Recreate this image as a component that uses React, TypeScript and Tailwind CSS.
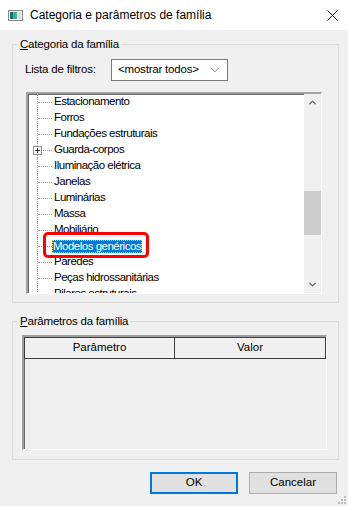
import { ChevronDown, ChevronUp } from 'lucide-react';

const items = [
  'Estacionamento',
  'Forros',
  'Fundações estruturais',
  'Guarda-corpos',
  'Iluminação elétrica',
  'Janelas',
  'Luminárias',
  'Massa',
  'Mobiliário',
  'Modelos genéricos',
  'Paredes',
  'Peças hidrossanitárias',
  'Pilares estruturais',
];

const font = "font-['Liberation_Sans',Arial,sans-serif]";

function WindowIcon() {
  return (
    <svg width="15" height="11" viewBox="0 0 15 11">
      <rect x="0.5" y="0.5" width="14" height="10" fill="#f4f4f4" stroke="#8a8a8a" />
      <rect x="2" y="2" width="3" height="7" fill="#1f6f78" />
      <rect x="5" y="2" width="4" height="7" fill="#3fb08a" />
      <rect x="10" y="2" width="3" height="7" fill="#d6dde0" />
    </svg>
  );
}

function TreeRow({ label }: { label: string }) {
  const selected = label === 'Modelos genéricos';
  const expandable = label === 'Guarda-corpos';
  return (
    <div className="relative flex h-[16px] items-center">
      <div className="absolute left-[9px] top-0 h-[16px] border-l border-dotted border-[#a0a0a0]" />
      <div className="ml-[10px] w-[14px] border-t border-dotted border-[#a0a0a0]" />
      {expandable && (
        <div className="absolute left-[5px] top-[4px] flex h-[9px] w-[9px] items-center justify-center border border-[#919191] bg-white">
          <svg width="7" height="7" viewBox="0 0 7 7">
            <path d="M1 3.5h5M3.5 1v5" stroke="#333" strokeWidth="1" />
          </svg>
        </div>
      )}
      <span
        className={
          selected
            ? 'ml-[0px] h-[13px] px-[1px] leading-[12px] bg-[#0078d7] text-white outline outline-1 outline-dotted outline-[#f5c56b] -outline-offset-1 tracking-[-0.5px]'
            : 'ml-[2px] text-black tracking-[-0.5px]'
        }
      >
        {label}
      </span>
    </div>
  );
}

export default function App() {
  return (
    <div className={`w-[348px] h-[506px] bg-[#f0f0f0] flex flex-col text-[11.5px] text-black ${font}`}>
      <div className="h-[30px] bg-white flex items-center pl-[8px] pr-[10px]">
        <WindowIcon />
        <span className="ml-[7px] text-[12px] text-black">Categoria e parâmetros de família</span>
        <svg className="ml-auto" width="11" height="11" viewBox="0 0 11 11">
          <path d="M0.5 0.5l10 10M10.5 0.5l-10 10" stroke="#111" strokeWidth="1" />
        </svg>
      </div>

      <fieldset className="ml-[12px] mt-[6px] w-[327px] border border-[#dcdcdc] px-[12px] pb-[8px]">
        <legend className="ml-[-7px] px-[2px] h-[16px] leading-[16px] tracking-[-0.2px]">
          <span className="underline">C</span>ategoria da família
        </legend>
        <div className="mt-[7px] flex items-center tracking-[-0.2px]">
          <span className="w-[86px]">Lista de filtros:</span>
          <div className="h-[22px] w-[117px] bg-white border border-[#7a7a7a] flex items-center pl-[6px] pr-[5px]">
            <span>&lt;mostrar todos&gt;</span>
            <ChevronDown className="ml-auto" size={14} strokeWidth={1} color="#333" />
          </div>
        </div>

        <div className="relative mt-[11px] ml-[1px] h-[202px] w-[296px] border-t-2 border-l-2 border-r border-b border-t-[#a0a0a0] border-l-[#a0a0a0] border-r-white border-b-white shadow-[inset_1px_1px_0_#696969] bg-white flex overflow-hidden">
          <div className="flex-1">
            {items.map(it => (
              <TreeRow key={it} label={it} />
            ))}
          </div>
          <div className="w-[17px] bg-[#f0f0f0] flex flex-col">
            <div className="h-[17px] flex items-center justify-center">
              <ChevronUp size={11} strokeWidth={3} color="#606060" />
            </div>
            <div className="flex-1 pt-[80px]">
              <div className="h-[44px] bg-[#cdcdcd]" />
            </div>
            <div className="h-[17px] flex items-center justify-center">
              <ChevronDown size={11} strokeWidth={3} color="#606060" />
            </div>
          </div>
          <div className="absolute left-[15px] top-[138px] h-[26px] w-[106px] rounded-[5px] border-[3px] border-[#ff0000]" />
        </div>
      </fieldset>

      <fieldset className="ml-[12px] mt-[10px] w-[327px] border border-[#dcdcdc] pl-[9px] pb-[9px]">
        <legend className="ml-[-4px] px-[2px] h-[16px] leading-[16px] tracking-[-0.2px]">
          <span className="underline">P</span>arâmetros da família
        </legend>
        <div className="mt-[6px] h-[115px] w-[305px] border-t-2 border-l-2 border-r border-b border-t-[#a0a0a0] border-l-[#a0a0a0] border-r-white border-b-white shadow-[inset_1px_1px_0_#696969]">
          <div className="flex h-[22px] w-[302px] border border-[#3c3c3c]">
            <div className="w-[150px] border-r border-[#3c3c3c] flex items-center justify-center">Parâmetro</div>
            <div className="flex-1 flex items-center justify-center">Valor</div>
          </div>
        </div>
      </fieldset>

      <div className="mt-[12px] flex justify-end gap-[11px] pr-[11px]">
        <button className="h-[22px] w-[88px] bg-[#e1e1e1] border-2 border-[#0078d7]">OK</button>
        <button className="h-[22px] w-[88px] bg-[#e1e1e1] border border-[#adadad]">Cancelar</button>
      </div>

      <div className="flex justify-end pr-[2px] mt-[2px]">
        <svg width="8" height="8" viewBox="0 0 8 8">
          <rect x="6" y="0" width="2" height="2" fill="#bcbcbc" />
          <rect x="3" y="3" width="2" height="2" fill="#bcbcbc" />
          <rect x="6" y="3" width="2" height="2" fill="#bcbcbc" />
          <rect x="0" y="6" width="2" height="2" fill="#bcbcbc" />
          <rect x="3" y="6" width="2" height="2" fill="#bcbcbc" />
          <rect x="6" y="6" width="2" height="2" fill="#bcbcbc" />
        </svg>
      </div>
    </div>
  );
}
